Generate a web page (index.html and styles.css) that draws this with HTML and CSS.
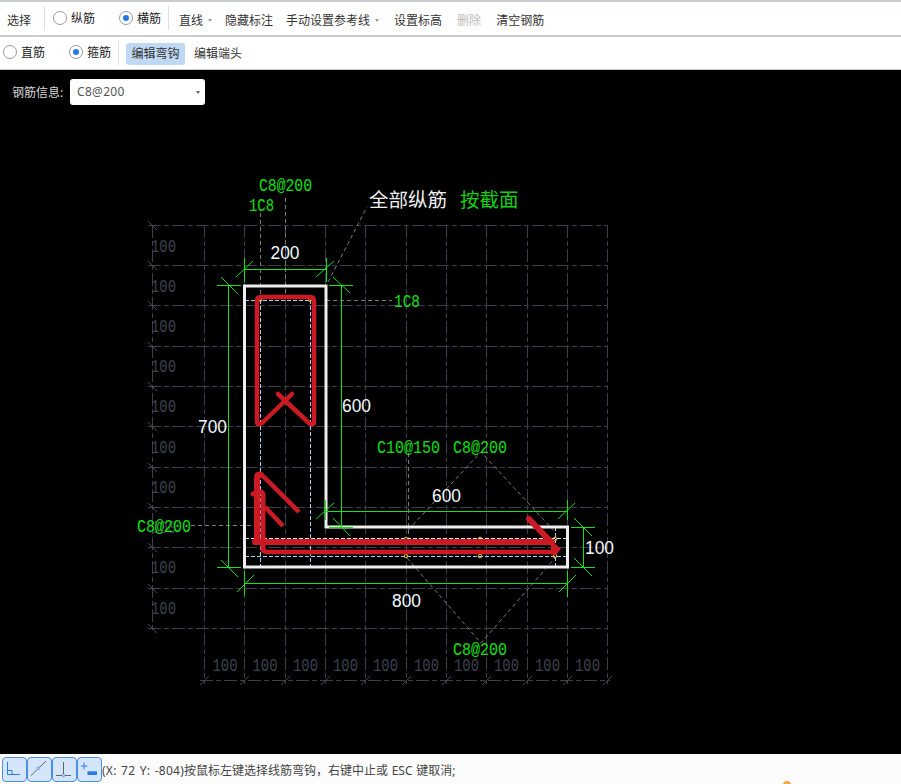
FILE: index.html
```html
<!DOCTYPE html>
<html lang="zh">
<head>
<meta charset="utf-8">
<title>编辑弯钩</title>
<link rel="stylesheet" href="styles.css">
</head>
<body>
<div class="page">
  <div class="toolbar row-one">
    <span class="tool first">选择</span>
    <span class="divider div-a"></span>
    <span class="radio r-a"><i class="dot"></i>纵筋</span>
    <span class="radio r-b"><i class="dot on"></i>横筋</span>
    <span class="divider div-b"></span>
    <span class="tool line-select">直线<i class="caret"></i></span>
    <span class="tool hide-mark">隐藏标注</span>
    <span class="tool manual">手动设置参考线<i class="caret"></i></span>
    <span class="tool elevation">设置标高</span>
    <span class="tool remove">删除</span>
    <span class="tool clear">清空钢筋</span>
  </div>
  <div class="toolbar row-two">
    <span class="radio r-c"><i class="dot"></i>直筋</span>
    <span class="radio r-d"><i class="dot on"></i>箍筋</span>
    <span class="divider div-c"></span>
    <span class="tool active">编辑弯钩</span>
    <span class="tool ends">编辑端头</span>
  </div>
  <div class="canvas">
    <div class="rebar-form">
      <label class="rebar-label">钢筋信息:</label>
      <div class="select">C8@200<i class="caret dark"></i></div>
    </div>
    <svg class="drawing" width="901" height="684" viewBox="0 70 901 684">
      <path class="grid" d="M148 225.500H607M148 265.500H607M148 305.500H607M148 346.500H607M148 386.500H607M148 426.500H607M148 467.500H607M148 507.500H607M148 547.500H607M148 588.500H607M148 628.500H607M204.500 225V684M244.500 225V684M285.500 225V684M325.500 225V684M365.500 225V684M406.500 225V684M446.500 225V684M486.500 225V684M527.500 225V684M567.500 225V684M607.500 225V684"/>
      <path class="axis" d="M152.500 225V632M200 680.500H610"/>
      <path class="axis-tick" d="M148 221L157 230M148 261L157 270M148 301L157 310M148 342L157 351M148 382L157 391M148 422L157 431M148 463L157 472M148 503L157 512M148 543L157 552M148 584L157 593M148 624L157 633M200 685L209 676M240 685L249 676M281 685L290 676M321 685L330 676M361 685L370 676M402 685L411 676M442 685L451 676M482 685L491 676M523 685L532 676M563 685L572 676M603 685L612 676"/>
      <g class="grid-text">
        <text x="151" y="252" textLength="25" lengthAdjust="spacingAndGlyphs">100</text>
        <text x="151" y="292" textLength="25" lengthAdjust="spacingAndGlyphs">100</text>
        <text x="151" y="332" textLength="25" lengthAdjust="spacingAndGlyphs">100</text>
        <text x="151" y="372" textLength="25" lengthAdjust="spacingAndGlyphs">100</text>
        <text x="151" y="412" textLength="25" lengthAdjust="spacingAndGlyphs">100</text>
        <text x="151" y="453" textLength="25" lengthAdjust="spacingAndGlyphs">100</text>
        <text x="151" y="493" textLength="25" lengthAdjust="spacingAndGlyphs">100</text>
        <text x="151" y="533" textLength="25" lengthAdjust="spacingAndGlyphs">100</text>
        <text x="151" y="573" textLength="25" lengthAdjust="spacingAndGlyphs">100</text>
        <text x="151" y="614" textLength="25" lengthAdjust="spacingAndGlyphs">100</text>
        <text x="212.500" y="671" textLength="25" lengthAdjust="spacingAndGlyphs">100</text>
        <text x="252.500" y="671" textLength="25" lengthAdjust="spacingAndGlyphs">100</text>
        <text x="293" y="671" textLength="25" lengthAdjust="spacingAndGlyphs">100</text>
        <text x="333" y="671" textLength="25" lengthAdjust="spacingAndGlyphs">100</text>
        <text x="373" y="671" textLength="25" lengthAdjust="spacingAndGlyphs">100</text>
        <text x="414" y="671" textLength="25" lengthAdjust="spacingAndGlyphs">100</text>
        <text x="454" y="671" textLength="25" lengthAdjust="spacingAndGlyphs">100</text>
        <text x="494" y="671" textLength="25" lengthAdjust="spacingAndGlyphs">100</text>
        <text x="535" y="671" textLength="25" lengthAdjust="spacingAndGlyphs">100</text>
        <text x="575" y="671" textLength="25" lengthAdjust="spacingAndGlyphs">100</text>
      </g>
      <path class="leader" d="M260.500 213V300M285.500 198V296M328 282L367 207M326 300.500H392M191 525.500H263M408.500 453V542M408 530L481 452L555 532M407 558L481 643L555 558"/>
      <path class="inner" d="M260.500 300V567M310.500 300V567M245 300.500H311M245 556.500H568M555.500 527V567"/>
      <path class="inner-white" d="M245 538.500H568"/>
      <path class="outline" d="M244.500 286H326V527H567.500V567H244.500Z"/>
      <path class="dim" d="M244 269.500H326M244.500 258V282M326.500 258V282M236 277L253 261M316 277L334 261M228.500 286V567M217 285.500H241M217 567.500H241M221 277L238 294M221 560L238 577M341.500 286V527M329 285.500H353M329 527.500H353M333 277L350 293M333 518L350 536M325 511.500H567M325.500 500V520M567.500 500V520M316 519L334 503M558 519L575 503M244 583.500H567M244.500 571V596M567.500 571V597M237 592L254 575M559 592L576 575M583.500 527V567M571 527.500H595M571 567.500H595M574 518L592 536M574 558L592 576"/>
      <g class="dim-text">
        <text x="270.500" y="259" textLength="29" lengthAdjust="spacingAndGlyphs">200</text>
        <text x="342" y="412" textLength="29" lengthAdjust="spacingAndGlyphs">600</text>
        <text x="198" y="433" textLength="29" lengthAdjust="spacingAndGlyphs">700</text>
        <text x="432" y="502" textLength="29" lengthAdjust="spacingAndGlyphs">600</text>
        <text x="392" y="607" textLength="29" lengthAdjust="spacingAndGlyphs">800</text>
        <text x="585" y="554" textLength="29" lengthAdjust="spacingAndGlyphs">100</text>
      </g>
      <g class="green-text">
        <text x="259" y="191" textLength="53" lengthAdjust="spacingAndGlyphs">C8@200</text>
        <text x="249" y="211" textLength="25" lengthAdjust="spacingAndGlyphs">1C8</text>
        <text x="394" y="307" textLength="26" lengthAdjust="spacingAndGlyphs">1C8</text>
        <text x="377" y="453" textLength="63" lengthAdjust="spacingAndGlyphs">C10@150</text>
        <text x="453" y="453" textLength="54" lengthAdjust="spacingAndGlyphs">C8@200</text>
        <text x="453" y="655" textLength="54" lengthAdjust="spacingAndGlyphs">C8@200</text>
        <text x="137" y="532" textLength="54" lengthAdjust="spacingAndGlyphs">C8@200</text>
      </g>
      <text class="title-white" x="369" y="207">全部纵筋</text>
      <text class="title-green" x="460" y="207">按截面</text>
      <g class="marks">
        <circle cx="260.500" cy="300" r="1.500"/><circle cx="310" cy="300" r="1.500"/>
        <circle cx="406" cy="539" r="1.800"/><circle cx="480" cy="539" r="1.800"/><circle cx="555" cy="539" r="1.800"/>
        <circle cx="406" cy="556" r="1.800"/><circle cx="480" cy="556" r="1.800"/><circle cx="555" cy="556" r="1.800"/>
      </g>
      <path class="red" d="M292 394L262 423Q257 427 257 421V301Q257 297 261 297H310Q314 297 314 301V421Q314 427 309 423L278 394"/>
      <path class="red thick" d="M257 542V478Q257 473 261 475"/>
      <path class="red thick" d="M255 542H552"/>
      <path class="red arm" d="M263 476L299 512M265 507L283 526"/>
      <path class="red lower-v" d="M263 550V495Q263 491 258 492L253 494"/>
      <path class="red" d="M263 548Q263 552 267 552H552"/>
      <path class="red thick" d="M529 519L552 543"/>
      <polygon class="red-fill" points="551,540 561,549 555,556 551,554"/>
    </svg>
  </div>
  <div class="statusbar">
    <div class="icon-buttons">
      <button class="icon-button" type="button"><svg width="17" height="17" viewBox="0 0 17 17"><path class="ic" d="M1.500 1V13.500H14M1.500 9.500H6V13.500"/></svg></button>
      <button class="icon-button" type="button"><svg width="17" height="17" viewBox="0 0 17 17"><path class="ic-grey" d="M0 14.500L15 0"/><circle class="ic-dot" cx="7.500" cy="7.200" r="1.300"/></svg></button>
      <button class="icon-button" type="button"><svg width="17" height="17" viewBox="0 0 17 17"><path class="ic-grey" d="M7.500 1V14.500M0 14.500H15"/><circle class="ic-dot" cx="7.500" cy="14.500" r="1.300"/></svg></button>
      <button class="icon-button" type="button"><svg width="17" height="17" viewBox="0 0 17 17"><path class="ic" d="M3 1.500V8.500M-0.500 5H6.500"/><rect class="ic-fill" x="6.500" y="10.300" width="9.500" height="3.700"/></svg></button>
    </div>
    <span class="status-text"><span class="coords">(X: 72 Y: -804)</span>按鼠标左键选择线筋弯钩，右键中止或 ESC 键取消;</span>
    <i class="corner-dot"></i>
  </div>
</div>
</body>
</html>
```
FILE: styles.css
```css
* { box-sizing: border-box; }
html, body { margin: 0; padding: 0; }
body { font-family: "Noto Sans", "Noto Sans CJK SC", sans-serif; font-size: 12px; color: #333; background: #fff; }
.page { width: 901px; height: 784px; display: flex; flex-direction: column; overflow: hidden; position: relative; }

.toolbar { display: flex; align-items: center; background: #fff; flex: none; white-space: nowrap; }
.row-one { height: 37px; border-top: 2px solid #c8cbd0; border-bottom: 2px solid #c8cbd0; padding: 2px 0 0 7px; }
.row-two { height: 33px; border-bottom: 1px solid #c8cbd0; }

.tool { display: inline-flex; align-items: center; line-height: 18px; color: #333; }
.row-one .tool { margin-top: 2px; }
.divider { width: 1px; height: 24px; background: #dcdfe4; flex: none; }
.row-one .divider { margin-top: -3px; }
.radio { display: inline-flex; align-items: center; color: #222; margin-top: -3px; }
.dot { width: 14px; height: 14px; border-radius: 50%; border: 1px solid #9a9a9a; background: #fff; margin-right: 4px; flex: none; position: relative; }
.dot.on::after { content: ""; position: absolute; left: 3px; top: 3px; width: 6px; height: 6px; border-radius: 50%; background: #1f78ea; }
.caret { display: inline-block; width: 0; height: 0; border-left: 2.500px solid transparent; border-right: 2.500px solid transparent; border-top: 3px solid #999; margin-left: 5px; }
.caret.dark { border-top-color: #666; position: absolute; right: 5px; top: 12px; margin: 0; }

.div-a { margin-left: 13px; }
.r-a { margin-left: 8px; }
.r-b { margin-left: 24px; }
.div-b { margin-left: 7px; }
.line-select { margin-left: 10px; }
.hide-mark { margin-left: 13px; }
.manual { margin-left: 13px; }
.elevation { margin-left: 15px; }
.remove { margin-left: 15px; color: #bbb; }
.clear { margin-left: 15px; }

.r-c { margin-left: 3px; }
.r-d { margin-left: 24px; }
.div-c { margin-left: 7px; }
.active { margin-left: 7px; height: 22px; width: 59px; justify-content: center; background: #bfd9f3; border-radius: 3px; margin-top: 2px; }
.ends { margin-left: 9px; margin-top: 2px; }

.canvas { flex: 1; background: #000; position: relative; min-height: 0; }
.drawing { display: block; }
.rebar-form { position: absolute; left: 12px; top: 9px; display: flex; align-items: center; }
.rebar-label { color: #d8d8d8; width: 58px; }
.select { position: relative; width: 135px; height: 26px; background: #fff; border-radius: 3px; line-height: 26px; padding-left: 7px; color: #555; letter-spacing: 0.300px; }

.grid { fill: none; stroke: #3a404c; stroke-width: 1; stroke-dasharray: 13 3 5 3; }
.axis { fill: none; stroke: #3a404c; stroke-width: 1; stroke-dasharray: 13 3 5 3; }
.axis-tick { fill: none; stroke: #434a57; stroke-width: 1; }
.grid-text text { font-family: "Liberation Mono", monospace; font-size: 18px; fill: #3c424e; }
.leader { fill: none; stroke: #7c7c7c; stroke-width: 1; stroke-dasharray: 4 3; }
.inner { fill: none; stroke: #a9cdf5; stroke-width: 1; stroke-dasharray: 4 2; }
.inner-white { fill: none; stroke: #e8e8e8; stroke-width: 1; stroke-dasharray: 4 2; }
.outline { fill: none; stroke: #eeeeee; stroke-width: 3; }
.dim { fill: none; stroke: #16e016; stroke-width: 1; }
.dim-text text { font-family: "Liberation Sans", sans-serif; font-size: 18px; fill: #f4f8ff; }
.green-text text { font-family: "Liberation Mono", monospace; font-size: 18px; fill: #10e010; }
.title-white { font-family: "Noto Sans CJK SC", sans-serif; font-size: 19.500px; fill: #f0f0f0; }
.title-green { font-family: "Noto Sans CJK SC", sans-serif; font-size: 19.500px; fill: #10d010; }
.marks circle { fill: none; stroke: #f0c830; stroke-width: 1; }
.red { fill: none; stroke: #cc1a24; stroke-width: 4.500; stroke-linejoin: round; stroke-linecap: round; }
.thick { stroke-width: 6; }
.arm { stroke-width: 4.500; stroke-linecap: butt; }
.lower-v { stroke-width: 5; }
.red-fill { fill: #cc1a24; }

.statusbar { height: 30px; flex: none; background: #fcfcfc; display: flex; align-items: center; position: relative; padding: 3px 0 2px 2px; }
.icon-buttons { display: flex; }
.icon-button { width: 25px; height: 25px; padding: 0; background: #d5e5fb; border: 1.500px solid #4a90e2; border-radius: 4px; display: flex; align-items: center; justify-content: center; }
.ic { fill: none; stroke: #2a7de1; stroke-width: 1; }
.ic-grey { fill: none; stroke: #666; stroke-width: 1; }
.ic-dot { fill: #d5e5fb; stroke: #5a9ae6; stroke-width: 1; }
.ic-fill { fill: #2a7de1; }
.status-text { color: #444; word-spacing: 0.500px; }
.coords { letter-spacing: 0.270px; word-spacing: 1px; }
.corner-dot { position: absolute; left: 783px; bottom: -5px; width: 8px; height: 8px; border-radius: 50%; background: #f4a742; }
```
